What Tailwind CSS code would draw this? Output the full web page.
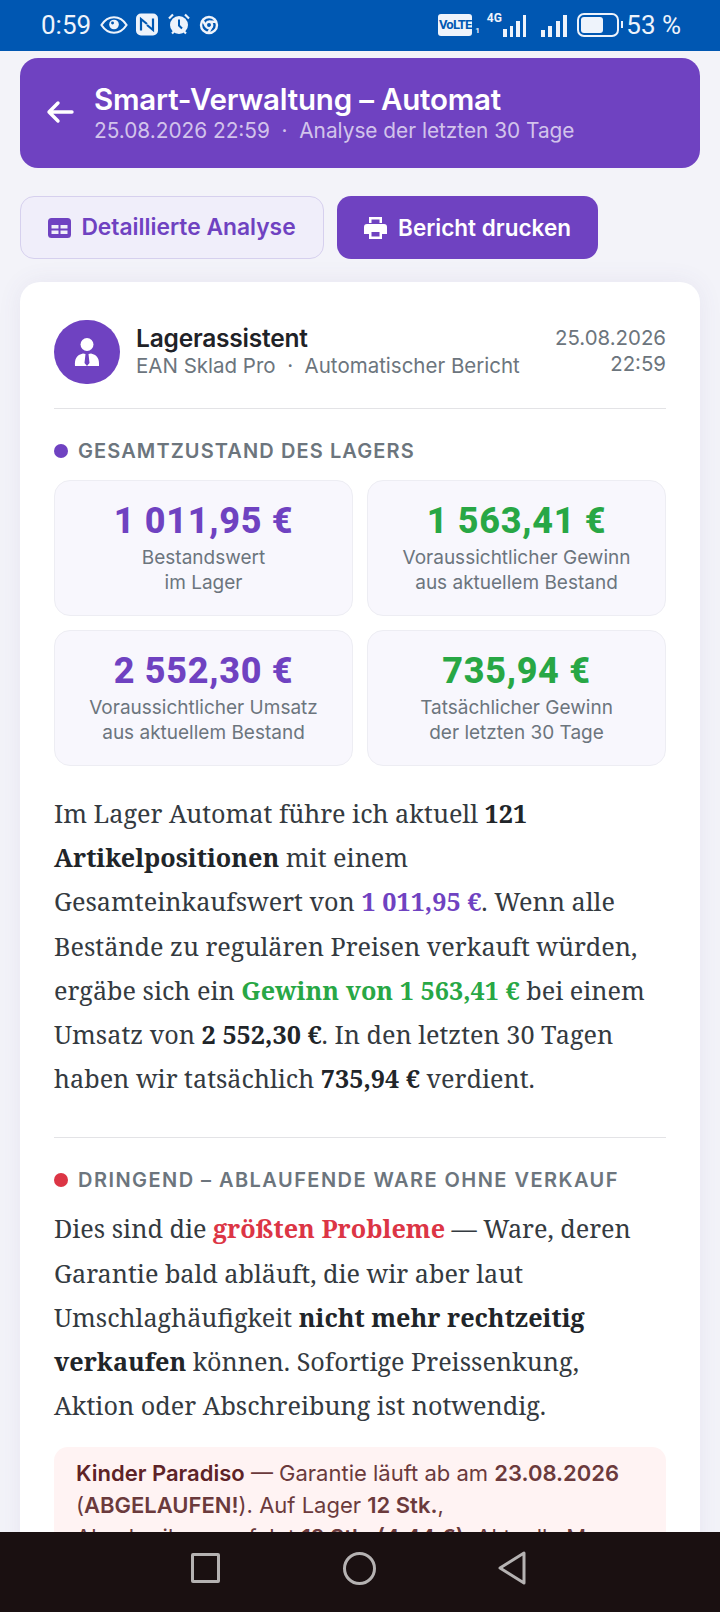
<!DOCTYPE html>
<html lang="de">
<head>
    <meta charset="UTF-8">
    <meta name="viewport" content="width=device-width, initial-scale=1.0">
    <title>Smart-Verwaltung</title>
    <script src="https://cdn.jsdelivr.net/npm/@tailwindcss/browser@4"></script>
</head>
<body class="relative h-[1612px] w-[720px] overflow-hidden bg-[#f3f3f9] font-['Inter','Noto_Sans',sans-serif]">

    <!-- Status bar -->
    <div class="flex h-[51px] items-center justify-between bg-[#0057b2] pl-[41px] pr-[39px] pb-[2px] text-[#eef3fb]">
        <div class="flex items-center">
            <span class="font-['Roboto',sans-serif] text-[26px] leading-none">0:59</span>
            <svg width="28" height="20" viewBox="0 0 29 20" fill="none" class="ml-[9px]"><path d="M1.5 10C5 4.5 9.5 2 14.500 2s9.500 2.500 13 8c-3.500 5.500-8 8-13 8s-9.500-2.500-13-8z" stroke="currentColor" stroke-width="2.200"/><circle cx="14.500" cy="9.500" r="5" fill="currentColor"/><circle cx="13" cy="8" r="1.500" fill="#0057b2"/></svg>
            <svg width="22" height="23" viewBox="0 0 22 22" class="ml-[8px]"><rect x="0" y="0" width="22" height="22" rx="5" fill="currentColor"/><path d="M5 17V5.500l6 5M17 5v11.500l-6-5" fill="none" stroke="#0057b2" stroke-width="2.200"/></svg>
            <svg width="24" height="25" viewBox="0 0 24 24" class="ml-[9px]"><circle cx="12" cy="12.500" r="9" fill="currentColor"/><path d="M2 6l4-4M22 6l-4-4M5 21l2-2M19 21l-2-2" stroke="currentColor" stroke-width="2.200"/><path d="M12 7v6l3 3" fill="none" stroke="#0057b2" stroke-width="2"/></svg>
            <svg width="20" height="20" viewBox="0 0 20 20" class="ml-[8px]" fill="none" stroke="currentColor" stroke-width="2.400"><circle cx="10" cy="10" r="8"/><circle cx="10" cy="10" r="3.200"/><path d="M10 6.800h7M7.200 11.600L3.800 5.500M12.800 11.600L9 18"/></svg>
        </div>
        <div class="flex items-center">
            <span class="flex h-[22px] w-[34px] items-center justify-center rounded-[3px] bg-[#eef3fb] font-['Roboto',sans-serif] text-[13px] font-bold tracking-[-0.8px] text-[#0057b2]">VoLTE</span>
            <span class="ml-[3px] mt-[12px] font-['Roboto',sans-serif] text-[8px] leading-none font-bold">1</span>
            <div class="relative ml-[7px] flex h-[24px] w-[39px] items-end justify-end gap-[3px]">
                <span class="absolute left-0 top-[-1px] font-['Roboto',sans-serif] text-[12px] leading-none font-bold">4G</span>
                <span class="h-[8px] w-[3.500px] bg-current"></span>
                <span class="h-[11px] w-[3.500px] bg-current"></span>
                <span class="h-[16px] w-[3.500px] bg-current"></span>
                <span class="h-[22px] w-[3px] bg-current"></span>
            </div>
            <div class="ml-[15px] flex h-[24px] items-end gap-[3.500px]">
                <span class="h-[7px] w-[4px] bg-current"></span>
                <span class="h-[11px] w-[4px] bg-current"></span>
                <span class="h-[16px] w-[4px] bg-current"></span>
                <span class="h-[22px] w-[4px] bg-current"></span>
            </div>
            <div class="ml-[10px] h-[24px] w-[42px] rounded-[7px] border-2 border-[#eef3fb] p-[2px]">
                <div class="h-full w-[22px] rounded-[3px] bg-[#eef3fb]"></div>
            </div>
            <span class="ml-[2px] mr-[3px] h-[7px] w-[2px] bg-[#eef3fb]"></span>
            <span class="font-['Roboto',sans-serif] text-[26px] leading-none">53 %</span>
        </div>
    </div>

    <main class="px-5 pt-[7px]">
        <!-- Header -->
        <div class="flex h-[110px] items-center gap-[20px] rounded-[18px] bg-[#6f42c1] px-[26px] pb-[2px] text-white">
            <svg width="28" height="24" viewBox="0 0 28 24" fill="none" stroke="currentColor" stroke-width="3.400" stroke-linecap="round" stroke-linejoin="round" class="shrink-0"><path d="M26 12H3M12 3l-9 9 9 9"/></svg>
            <div>
                <div class="text-[29.500px] leading-[36px] font-semibold tracking-[-0.2px]">Smart-Verwaltung – Automat</div>
                <div class="text-[20.800px] leading-[27px] text-white/70">25.08.2026 22:59 &nbsp;·&nbsp; Analyse der letzten 30 Tage</div>
            </div>
        </div>

        <!-- Buttons -->
        <div class="mt-[28px] flex gap-[13px]">
            <button class="flex h-[63px] w-[304px] items-center justify-center gap-[10px] rounded-[14px] border border-[#d6d0ee] bg-[#f0eefa] text-[22.800px] font-semibold text-[#6f42c1]">
                <svg width="23" height="20" viewBox="0 0 23 20"><rect width="23" height="20" rx="3.500" fill="currentColor"/><path d="M3.500 7h7v3.500h-7zM12.500 7h7v3.500h-7zM3.500 12.500h7V16h-7zM12.500 12.500h7V16h-7z" fill="#f0eefa"/></svg>
                Detaillierte Analyse
            </button>
            <button class="flex h-[63px] w-[261px] items-center justify-center gap-[11px] rounded-[14px] bg-[#6f42c1] text-[22.500px] font-semibold text-white">
                <svg width="23" height="24" viewBox="0 0 23 24" fill="currentColor"><path d="M5 1h13v6h-2.500V3.500h-8V7H5z"/><path fill-rule="evenodd" d="M3 8h17a3 3 0 0 1 3 3v7h-5v5H5v-5H0v-7a3 3 0 0 1 3-3zm4.500 8v4.500h8V16z"/></svg>
                Bericht drucken
            </button>
        </div>

        <!-- Report card -->
        <section class="mt-[23px] h-[1400px] rounded-[20px] bg-white px-[34px] pt-[38px] shadow-[0_0_24px_rgba(90,80,140,0.08)]">
            <div class="flex h-[89px] items-start border-b border-[#e3e3e6]">
                <div class="flex h-[64px] w-[66px] items-center justify-center rounded-full bg-[#6f42c1]">
                    <svg width="26" height="30" viewBox="0 0 26 30" fill="#fff"><circle cx="13" cy="7.500" r="6.500"/><path d="M1 29c-.5-7 1.500-11 8-12.500L11.500 17l-1 9 2.500 3 2.500-3-1-9 2.500-.5c6.500 1.500 8.500 5.500 8 12.500z"/></svg>
                </div>
                <div class="ml-[16px] mt-[4px]">
                    <div class="text-[24.500px] leading-[29px] font-semibold tracking-[-0.2px] text-[#1f2227]">Lagerassistent</div>
                    <div class="text-[20.500px] leading-[26px] text-[#6c757d]">EAN Sklad Pro &nbsp;·&nbsp; Automatischer Bericht</div>
                </div>
                <div class="ml-auto mt-[5px] text-right text-[20.400px] leading-[26px] text-[#6c757d]">25.08.2026<br>22:59</div>
            </div>

            <!-- Overall state -->
            <div class="mt-[29px] flex items-center gap-[10px] text-[20px] leading-[26px] font-semibold tracking-[1.100px] text-[#6c757d]">
                <span class="h-[14px] w-[14px] rounded-full bg-[#6f42c1]"></span>
                GESAMTZUSTAND DES LAGERS
            </div>
            <div class="mt-[16px] grid grid-cols-2 gap-[14px]">
                <div class="h-[136px] rounded-[16px] border border-[#ededf3] bg-[#f8f7fd] pt-[19px] text-center">
                    <div class="font-['Roboto',sans-serif] text-[36px] leading-[43px] font-extrabold tracking-[0.700px] text-[#6f42c1]">1 011,95 €</div>
                    <div class="mt-[2px] text-[19px] leading-[25px] text-[#6c757d]">Bestandswert<br>im Lager</div>
                </div>
                <div class="h-[136px] rounded-[16px] border border-[#ededf3] bg-[#f8f7fd] pt-[19px] text-center">
                    <div class="font-['Roboto',sans-serif] text-[36px] leading-[43px] font-extrabold tracking-[0.700px] text-[#28a745]">1 563,41 €</div>
                    <div class="mt-[2px] text-[19px] leading-[25px] text-[#6c757d]">Voraussichtlicher Gewinn<br>aus aktuellem Bestand</div>
                </div>
                <div class="h-[136px] rounded-[16px] border border-[#ededf3] bg-[#f8f7fd] pt-[19px] text-center">
                    <div class="font-['Roboto',sans-serif] text-[36px] leading-[43px] font-extrabold tracking-[0.700px] text-[#6f42c1]">2 552,30 €</div>
                    <div class="mt-[2px] text-[19px] leading-[25px] text-[#6c757d]">Voraussichtlicher Umsatz<br>aus aktuellem Bestand</div>
                </div>
                <div class="h-[136px] rounded-[16px] border border-[#ededf3] bg-[#f8f7fd] pt-[19px] text-center">
                    <div class="font-['Roboto',sans-serif] text-[36px] leading-[43px] font-extrabold tracking-[0.700px] text-[#28a745]">735,94 €</div>
                    <div class="mt-[2px] text-[19px] leading-[25px] text-[#6c757d]">Tatsächlicher Gewinn<br>der letzten 30 Tage</div>
                </div>
            </div>

            <p class="mt-[25px] font-['Noto_Serif','DejaVu_Serif',serif] text-[25.200px] leading-[44.200px] text-[#343a40]">
                Im Lager Automat führe ich aktuell <b class="text-[#212529]">121</b><br><b class="text-[#212529]">Artikelpositionen</b> mit einem<br>Gesamteinkaufswert von <b class="text-[#6f42c1]">1 011,95 €</b>. Wenn alle<br>Bestände zu regulären Preisen verkauft würden,<br>ergäbe sich ein <b class="text-[#28a745]">Gewinn von 1 563,41 €</b> bei einem<br>Umsatz von <b class="text-[#212529]">2 552,30 €</b>. In den letzten 30 Tagen<br>haben wir tatsächlich <b class="text-[#212529]">735,94 €</b> verdient.
            </p>

            <hr class="mt-[37px] border-[#e3e3e6]">

            <!-- Urgent -->
            <div class="mt-[29px] flex items-center gap-[10px] text-[20px] leading-[26px] font-semibold tracking-[1.450px] text-[#6c757d]">
                <span class="h-[14px] w-[14px] rounded-full bg-[#dc3545]"></span>
                DRINGEND – ABLAUFENDE WARE OHNE VERKAUF
            </div>
            <p class="mt-[13px] font-['Noto_Serif','DejaVu_Serif',serif] text-[25.200px] leading-[44.200px] text-[#343a40]">
                Dies sind die <b class="text-[#dc3545]">größten Probleme</b> — Ware, deren<br>Garantie bald abläuft, die wir aber laut<br>Umschlaghäufigkeit <b class="text-[#212529]">nicht mehr rechtzeitig</b><br><b class="text-[#212529]">verkaufen</b> können. Sofortige Preissenkung,<br>Aktion oder Abschreibung ist notwendig.
            </p>
            <div class="mt-[20px] rounded-[14px] bg-[#fff3f3] px-[22px] py-[10px] text-[22px] leading-[32px] text-[#6b3a3c]">
                <b class="font-semibold text-[#5e2327]">Kinder Paradiso</b> — Garantie läuft ab am <b class="font-semibold">23.08.2026</b> (<b class="font-semibold">ABGELAUFEN!</b>). Auf Lager <b class="font-semibold">12 Stk.</b>,<br>Abschreibung erfolgt <b class="font-semibold">12 Stk. (4,44 €)</b>. Aktuelle M
            </div>
        </section>
    </main>

    <!-- Navigation bar -->
    <nav class="absolute inset-x-0 bottom-0 flex h-[80px] items-center bg-[#1a1011] pb-[8px] pl-[191px]">
        <span class="h-[30px] w-[29px] rounded-[2px] border-[3px] border-[#b5b2b2]"></span>
        <span class="ml-[123px] h-[33px] w-[33px] rounded-full border-[3px] border-[#b5b2b2]"></span>
        <svg class="ml-[122px]" width="28" height="34" viewBox="0 0 28 34" fill="none" stroke="#b5b2b2" stroke-width="3" stroke-linejoin="round"><path d="M26 2v30L2 17z"/></svg>
    </nav>
</body>
</html>
